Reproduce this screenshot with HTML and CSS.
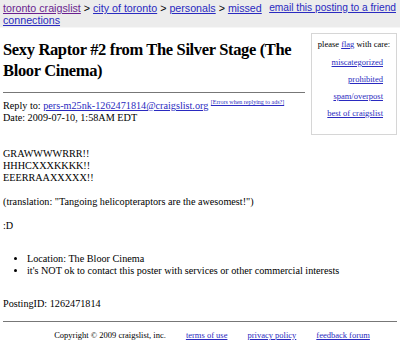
FILE: index.html
```html
<!DOCTYPE html>
<html lang="en">

<head>
    <meta charset="UTF-8">
    <title>Sexy Raptor #2 from The Silver Stage (The Bloor Cinema)</title>
    <link rel="stylesheet" href="styles.css">
</head>

<body>
    <!-- 顶部导航 -->
    <div class="bchead">
        <div class="crumbs">
            <a href="#" class="visited">toronto craigslist</a> &gt;
            <a href="#">city of toronto</a> &gt;
            <a href="#">personals</a> &gt;
            <a href="#">missed connections</a>
        </div>
        <a href="#" class="email">email this posting to a friend</a>
    </div>

    <div class="main">
        <!-- 右侧举报框 -->
        <div class="flags">
            <div class="flag-title">please <a href="#">flag</a> with care:</div>
            <a href="#">miscategorized</a>
            <a href="#">prohibited</a>
            <a href="#">spam/overpost</a>
            <a href="#">best of craigslist</a>
        </div>

        <h2 class="title">Sexy Raptor #2 from The Silver Stage (The Bloor Cinema)</h2>
        <hr class="line">

        <div class="meta">
            Reply to: <a href="#">pers-m25nk-1262471814@craigslist.org</a>
            <sup><a href="#">[Errors when replying to ads?]</a></sup><br>
            Date: 2009-07-10, 1:58AM EDT
        </div>

        <div class="body">
            GRAWWWWRRR!!<br>
            HHHCXXXKKKK!!<br>
            EEERRAAXXXXX!!<br>
            <br>
            (translation: "Tangoing helicopteraptors are the awesomest!")<br>
            <br>
            :D
        </div>

        <ul class="info">
            <li>Location: The Bloor Cinema</li>
            <li>it's NOT ok to contact this poster with services or other commercial interests</li>
        </ul>

        <div class="posting">PostingID: 1262471814</div>
    </div>

    <hr class="foot-line">
    <div class="footer">
        <span>Copyright &copy; 2009 craigslist, inc.</span>
        <a href="#">terms of use</a>
        <a href="#">privacy policy</a>
        <a href="#">feedback forum</a>
    </div>
</body>

</html>
```

FILE: styles.css
```css
body {
    margin: 0;
    font-family: "Liberation Serif", "Times New Roman", serif;
    font-size: 10.2px;
    color: #000;
    background: #fff;
}

a {
    color: #2a2ac0;
}

.bchead {
    display: flex;
    justify-content: space-between;
    height: 25px;
    padding: 2px 4px 0 3px;
    background-color: #ececec;
    border-bottom: 1px solid #f6f6f6;
    font-family: "Liberation Sans", Arial, sans-serif;
    font-size: 10.7px;
    line-height: 12px;
}

.crumbs {
    width: 262px;
}

.bchead .visited {
    color: #6a1f8f;
}

.bchead .email {
    font-size: 10.2px;
}

.main {
    display: flow-root;
    padding: 0 3px;
}

.flags {
    float: right;
    width: 76px;
    margin-top: 5px;
    padding: 5px 4px 16px;
    border: 1px solid #d6d6d6;
    font-size: 8.5px;
    line-height: 10px;
    text-align: right;
}

.flag-title {
    text-align: center;
    margin-bottom: 8px;
}

.flags > a {
    display: block;
    margin-bottom: 7px;
    padding-right: 9px;
}

.flags > a:last-child {
    margin-bottom: 0;
}

.title {
    margin: 11px 92px 0 0;
    font-size: 16.5px;
    line-height: 21px;
    letter-spacing: -0.35px;
}

.line {
    margin: 11px 92px 0 0;
    border: 0;
    border-top: 1px solid #777;
}

.meta {
    margin-top: 7px;
    line-height: 12px;
}

.meta sup {
    font-size: 6px;
    line-height: 0;
    vertical-align: 5px;
}

.body {
    margin-top: 24px;
    line-height: 12px;
}

.info {
    margin: 21px 0 0;
    padding-left: 24px;
    line-height: 12px;
}

.posting {
    margin-top: 21px;
}

.foot-line {
    margin: 12px 3px 0;
    border: 0;
    border-top: 1px solid #777;
}

.footer {
    display: flex;
    justify-content: center;
    gap: 20px;
    margin-top: 8px;
    padding-left: 24px;
    font-size: 8.5px;
}
```
